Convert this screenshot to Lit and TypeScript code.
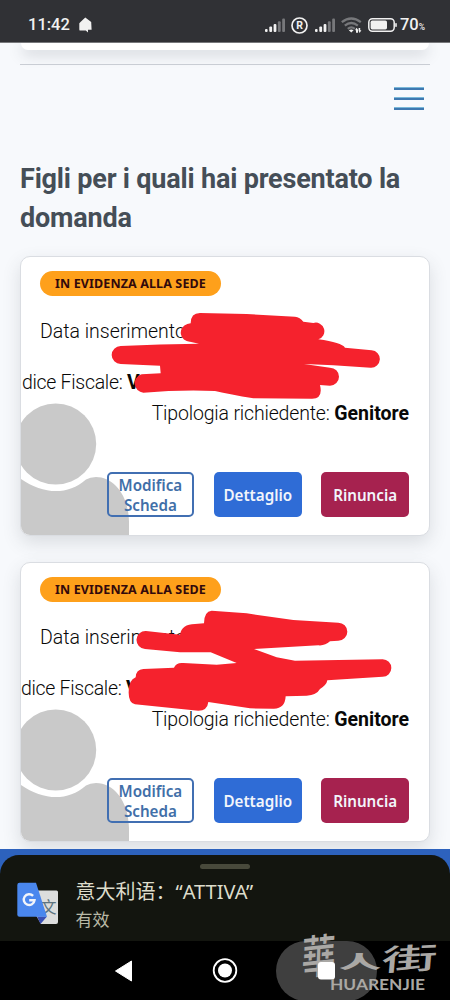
import { LitElement, html, css, svg } from "lit";
import { customElement, property } from "lit/decorators.js";

interface Scribble {
  dx: number;
  dy: number;
  d: string;
}

const SCRIBBLES: Scribble[] = [
  {
    dx: 80,
    dy: 49,
    d: "M300,24 L440,27 L585,35 Q600,36 610,50 L640,54 A25,25 0 0 1 655,103 Q725,113 735,128 L815,136 A26,26 0 0 1 812,188 L700,181 L612,177 L690,188 A27,27 0 0 1 690,242 L660,240 Q670,282 635,281 L460,280 Q390,268 345,258 Q240,254 130,263 A28,28 0 0 1 125,208 L182,205 L180,182 L62,177 A27,27 0 0 1 62,123 Q180,117 297,116 L270,110 A27,27 0 0 1 262,57 L272,55 Q272,24 300,24Z",
  },
  {
    dx: 80,
    dy: 38,
    d: "M335,32 L440,40 L580,60 L715,68 A27,27 0 0 1 715,122 L690,124 Q675,138 655,136 L462,147 L530,172 L585,182 L848,178 A26,26 0 0 1 848,230 L682,241 Q680,255 660,267 Q650,285 620,287 L557,289 Q555,327 520,326 L450,325 L325,306 Q322,332 295,332 L105,313 Q85,308 86,275 Q86,240 107,232 Q108,208 130,207 L222,203 Q228,187 250,189 L350,194 L410,189 L332,157 L240,157 L135,147 A27,27 0 0 1 138,93 L240,104 Q245,72 285,72 L312,70 Q312,34 335,32Z",
  },
];

const signal = svg`
  <rect x="0" y="11" width="2.6" height="3" rx="1" fill="#f1f1f1"/>
  <rect x="4.3" y="8.5" width="2.8" height="5.5" rx="1" fill="#f1f1f1"/>
  <rect x="8.6" y="6" width="2.8" height="8" rx="1" fill="#f1f1f1"/>
  <rect x="12.9" y="3.3" width="2.8" height="10.7" rx="1" fill="#77787b"/>
  <rect x="17.2" y="0.6" width="2.8" height="13.4" rx="1" fill="#77787b"/>`;

@customElement("status-bar")
export class StatusBar extends LitElement {
  static styles = css`
    :host {
      display: flex;
      align-items: center;
      box-sizing: border-box;
      padding: 8px 25px 0 28px;
      background: #303135;
      color: #f1f1f1;
      border-bottom: 1px solid #77787b;
      height: 43px;
      font: 500 16.5px/20px Roboto, sans-serif;
    }
    .bell { margin-left: 9px; }
    .space { flex: 1; }
    .sig { margin-right: 6px; }
    .reg { margin-right: 7px; }
    .wifi { margin-right: 6px; }
    .bat { margin-right: 3px; }
    .pct { font-size: 8.5px; margin: 4px 0 0 0; line-height: 10px; }
    svg { display: block; flex: none; }
  `;
  render() {
    return html`
      <span>11:42</span>
      <svg class="bell" width="13" height="16" viewBox="0 0 13 16">
        <path d="M6.3 0.4 12.2 5 12.6 12.8H9V15.4L6.8 13.6H1.5Q0.300 13.600 0.3 12.400V6.3L2 4.5Z" fill="#f1f1f1"/>
      </svg>
      <div class="space"></div>
      <svg class="sig" width="20" height="14" viewBox="0 0 20 14">${signal}</svg>
      <svg class="reg" width="17" height="17" viewBox="0 0 17 17">
        <circle cx="8.5" cy="8.5" r="7.5" fill="none" stroke="#f1f1f1" stroke-width="1.7"/>
        <text x="8.6" y="12.3" text-anchor="middle" font-family="Roboto, sans-serif" font-weight="700" font-size="10.5" fill="#f1f1f1">R</text>
      </svg>
      <svg class="sig" width="20" height="14" viewBox="0 0 20 14">${signal}</svg>
      <svg class="wifi" width="21" height="16" viewBox="0 0 21 16">
        <g fill="none" stroke="#77787b" stroke-width="2.3">
          <path d="M0.8 5.2Q10.3-2.2 19.8 5.2"/>
          <path d="M3.8 8.6Q10.3 3.4 16.8 8.6"/>
          <path d="M6.8 11.8Q10.3 9 13.8 11.8"/>
        </g>
        <path d="M7.8 13.2Q10.3 11.6 12.6 13.2L10.3 15.6Z" fill="#f1f1f1"/>
        <path d="M15.6 10.8 17 12.8V15.8H15V13.2H14ZM18.6 16 17.6 13.8V11H19.2V13.2H20.4Z" fill="#f1f1f1"/>
      </svg>
      <svg class="bat" width="29" height="14" viewBox="0 0 29 14">
        <rect x="0.8" y="0.8" width="25.4" height="12.4" rx="3.6" fill="none" stroke="#f1f1f1" stroke-width="1.5"/>
        <rect x="2.6" y="2.6" width="16.4" height="8.8" rx="1.6" fill="#f1f1f1"/>
        <rect x="27.2" y="5" width="1.6" height="4" rx="0.8" fill="#f1f1f1"/>
      </svg>
      <span>70</span><span class="pct">%</span>
    `;
  }
}

@customElement("child-card")
export class ChildCard extends LitElement {
  @property({ type: Number }) index = 0;
  static styles = css`
    :host {
      display: flex;
      flex-direction: column;
      position: relative;
      box-sizing: border-box;
      height: 280px;
      padding: 14px 20px 18px 19px;
      overflow: hidden;
      background: #fff;
      border: 1px solid #dadde2;
      border-radius: 10px;
      box-shadow: 0 7px 18px rgba(60, 65, 75, 0.15);
      color: #080808;
      font: 400 19.5px/26px Roboto, sans-serif;
    }
    .badge {
      align-self: flex-start;
      box-sizing: border-box;
      width: 181px;
      height: 25px;
      border-radius: 13px;
      background: #fea01b;
      color: #32090c;
      font: 700 12.5px/25px "Noto Sans", sans-serif;
      text-align: center;
      white-space: nowrap;
      letter-spacing: 0.12px;
    }
    .row { white-space: nowrap; font-weight: 300; }
    .date { margin-top: 23px; }
    .code { margin-top: 25px; margin-left: -18px; letter-spacing: -0.3px; }
    .code.b { margin-left: -19px; }
    .type { margin-top: 5px; text-align: right; letter-spacing: -0.17px; }
    b { font-weight: 700; letter-spacing: 0; }
    .actions {
      display: flex;
      justify-content: flex-end;
      gap: 19.7px;
      margin-top: auto;
      z-index: 1;
    }
    .btn {
      display: flex;
      align-items: center;
      justify-content: center;
      box-sizing: border-box;
      width: 87.7px;
      height: 45px;
      border-radius: 5px;
      text-align: center;
      font: 600 15.2px/20px "Noto Sans", sans-serif;
      color: #f2f5fb;
    }
    .outline { border: 2.5px solid #416fb2; color: #416fa8; }
    .blue { background: #2f6cd6; }
    .red { background: #a6224f; }
    .avatar { position: absolute; left: 0; bottom: 0; }
    .scribble { position: absolute; left: -1px; top: -1px; z-index: 2; }
  `;
  render() {
    const s = SCRIBBLES[this.index];
    return html`
      <svg class="avatar" width="108" height="133" viewBox="21 402 108 133">
        <circle cx="55.7" cy="444" r="40.5" fill="#c9c9c9"/>
        <path d="M21 479C43 494 67 496 86 479.5Q90 477 96 477C113 477 128.600 494 129 522V536H21Z" fill="#c9c9c9"/>
      </svg>
      <div class="badge">IN EVIDENZA ALLA SEDE</div>
      <div class="row date">Data inserimento</div>
      <div class="row code ${this.index ? "b" : ""}">dice Fiscale: <b>V</b></div>
      <div class="row type">Tipologia richiedente: <b>Genitore</b></div>
      <div class="actions">
        <div class="btn outline">Modifica<br />Scheda</div>
        <div class="btn blue">Dettaglio</div>
        <div class="btn red">Rinuncia</div>
      </div>
      <svg class="scribble" width="410" height="280" viewBox="0 0 410 280">
        <path transform="translate(${s.dx} ${s.dy}) scale(0.33333)" d=${s.d} fill="#f5222d"/>
      </svg>
    `;
  }
}

@customElement("app-root")
export class AppRoot extends LitElement {
  static styles = css`
    :host {
      display: flex;
      flex-direction: column;
      position: relative;
      width: 450px;
      height: 1000px;
      overflow: hidden;
      background: #000;
    }
    .page {
      display: flex;
      flex-direction: column;
      height: 806px;
      box-sizing: border-box;
      padding: 0 20px;
      overflow: hidden;
      background: #f7f9fc;
    }
    .prev {
      flex: none;
      height: 7px;
      margin: 0 1px;
      background: #fff;
      border-radius: 0 0 9px 9px;
      box-shadow: 0 4px 14px rgba(60, 65, 75, 0.25);
    }
    .rule { flex: none; height: 1px; margin-top: 14px; background: #c9cdd4; }
    .menu {
      flex: none;
      display: flex;
      flex-direction: column;
      align-self: flex-end;
      gap: 7px;
      width: 30px;
      margin: 22px 6px 0 0;
    }
    .menu i { height: 3px; background: linear-gradient(#7ab8d8 1px, #3e78b0 1px); }
    h1 {
      flex: none;
      margin: 50px 0 19px;
      color: #454e57;
      font: 700 27px/38.5px Roboto, sans-serif;
      letter-spacing: -0.19px;
      white-space: nowrap;
    }
    .cards { display: flex; flex-direction: column; gap: 26px; }
    .footer { flex: none; height: 92px; box-sizing: border-box; padding-top: 6px; background: #2d62bd; }
    .sheet {
      height: 86px;
      box-sizing: border-box;
      padding-top: 9px;
      background: #13150f;
      border-radius: 19px 19px 0 0;
      color: #dddccb;
    }
    .handle { width: 50px; height: 5px; margin: 0 auto; border-radius: 3px; background: #48493b; }
    .row { display: flex; padding-left: 17px; gap: 16.5px; }
    .row svg { margin-top: 13px; }
    .t1 { margin-top: 8px; font: 400 20px/29px "Noto Sans", "Noto Sans CJK SC", sans-serif; white-space: nowrap; }
    .t2 { font: 400 17px/26px "Noto Sans CJK SC", sans-serif; color: #b9b9a6; }
    .nav { flex: none; height: 59px; background: #000; }
    .nav svg { display: block; }
    .mark { position: absolute; left: 276px; top: 900px; }
  `;
  render() {
    return html`
      <status-bar></status-bar>
      <div class="page">
        <div class="prev"></div>
        <div class="rule"></div>
        <div class="menu"><i></i><i></i><i></i></div>
        <h1>Figli per i quali hai presentato la<br />domanda</h1>
        <div class="cards">
          ${[0, 1].map((i) => html`<child-card .index=${i}></child-card>`)}
        </div>
      </div>
      <div class="footer">
        <div class="sheet">
          <div class="handle"></div>
          <div class="row">
            <svg width="42" height="43" viewBox="0 0 42 43">
              <path d="M17 8.500H39.500Q41 8.500 41 10V40Q41 42 39 42H24L17 30Z" fill="#dcdddd"/>
              <text x="23.500" y="31" font-family="Noto Sans CJK SC, sans-serif" font-size="16" fill="#5d7480">文</text>
              <path d="M20 34.500H30L23.500 42Z" fill="#3a50b4"/>
              <path d="M2.500 0.700H19L30 34.700H2.500Q0.300 34.700 0.300 32.500V3Q0.300 0.700 2.500 0.700Z" fill="#4a87ee"/>
              <path d="M16.100 13.900A5.400 5.400 0 1 0 17.500 18.300H12.200" fill="none" stroke="#f1f4fa" stroke-width="2.400"/>
            </svg>
            <div>
              <div class="t1">意大利语：“ATTIVA”</div>
              <div class="t2">有效</div>
            </div>
          </div>
        </div>
      </div>
      <div class="nav">
        <svg width="450" height="59" viewBox="0 941 450 59">
          <rect x="276" y="941" width="101" height="60" rx="30" fill="#3f3f3f"/>
          <path d="M131.500 961V981L115.500 971Z" fill="#fff" stroke="#fff" stroke-width="1" stroke-linejoin="round"/>
          <circle cx="225" cy="970.500" r="11.300" fill="none" stroke="#fff" stroke-width="1.800"/>
          <circle cx="225" cy="970.500" r="7" fill="#fff"/>
        </svg>
      </div>
      <svg class="mark" width="174" height="100" viewBox="276 900 174 100">
        <g fill="#aaa8a5" font-family="Noto Sans CJK TC, sans-serif">
          <text transform="translate(301 975) rotate(-6) skewX(-8) scale(0.9 1.2)" font-size="38" font-weight="500">華</text>
          <text transform="translate(339 969) scale(1.45 0.62)" font-size="29" font-weight="900">人</text>
          <text transform="translate(381 971) rotate(-3) skewX(-8) scale(1.8 0.95)" font-size="31" font-weight="500">街</text>
        </g>
        <rect x="318" y="962" width="17" height="17.500" rx="3" fill="#fff"/>
        <text x="330" y="990" textLength="95" lengthAdjust="spacingAndGlyphs" font-family="Lato, sans-serif" font-weight="700" font-size="14.500" fill="#aaa8a4">HUARENJIE</text>
      </svg>
    `;
  }
}
